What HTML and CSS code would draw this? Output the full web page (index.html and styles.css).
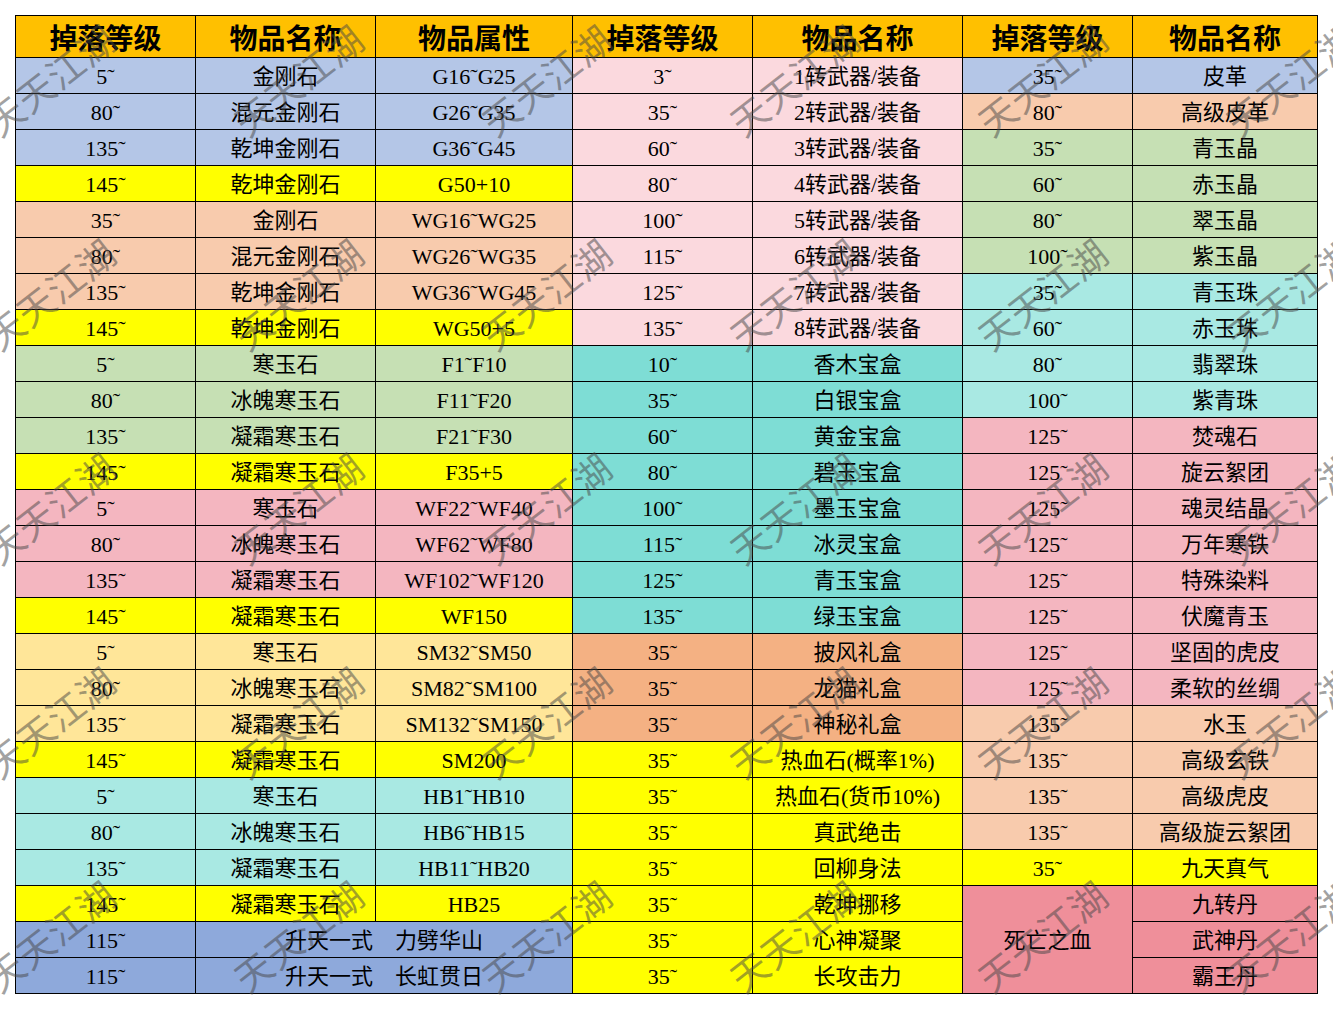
FILE: index.html
```html
<!DOCTYPE html>
<html lang="zh">
<head>
<meta charset="utf-8">
<title>掉落表</title>
<link rel="stylesheet" href="styles.css">
</head>
<body>
<div class="sheet">
<table class="drops">
<colgroup>
<col class="c1"><col class="c2"><col class="c3"><col class="c4"><col class="c5"><col class="c6"><col class="c7">
</colgroup>
<thead>
<tr><th>掉落等级</th><th>物品名称</th><th>物品属性</th><th>掉落等级</th><th>物品名称</th><th>掉落等级</th><th>物品名称</th></tr>
</thead>
<tbody>
<tr><td class="bl">5˜</td><td class="bl">金刚石</td><td class="bl">G16˜G25</td><td class="lp">3˜</td><td class="lp">1转武器/装备</td><td class="bl">35˜</td><td class="bl">皮革</td></tr>
<tr><td class="bl">80˜</td><td class="bl">混元金刚石</td><td class="bl">G26˜G35</td><td class="lp">35˜</td><td class="lp">2转武器/装备</td><td class="pe">80˜</td><td class="pe">高级皮革</td></tr>
<tr><td class="bl">135˜</td><td class="bl">乾坤金刚石</td><td class="bl">G36˜G45</td><td class="lp">60˜</td><td class="lp">3转武器/装备</td><td class="gr">35˜</td><td class="gr">青玉晶</td></tr>
<tr><td class="ye">145˜</td><td class="ye">乾坤金刚石</td><td class="ye">G50+10</td><td class="lp">80˜</td><td class="lp">4转武器/装备</td><td class="gr">60˜</td><td class="gr">赤玉晶</td></tr>
<tr><td class="pe">35˜</td><td class="pe">金刚石</td><td class="pe">WG16˜WG25</td><td class="lp">100˜</td><td class="lp">5转武器/装备</td><td class="gr">80˜</td><td class="gr">翠玉晶</td></tr>
<tr><td class="pe">80˜</td><td class="pe">混元金刚石</td><td class="pe">WG26˜WG35</td><td class="lp">115˜</td><td class="lp">6转武器/装备</td><td class="gr">100˜</td><td class="gr">紫玉晶</td></tr>
<tr><td class="pe">135˜</td><td class="pe">乾坤金刚石</td><td class="pe">WG36˜WG45</td><td class="lp">125˜</td><td class="lp">7转武器/装备</td><td class="cy">35˜</td><td class="cy">青玉珠</td></tr>
<tr><td class="ye">145˜</td><td class="ye">乾坤金刚石</td><td class="ye">WG50+5</td><td class="lp">135˜</td><td class="lp">8转武器/装备</td><td class="cy">60˜</td><td class="cy">赤玉珠</td></tr>
<tr><td class="gr">5˜</td><td class="gr">寒玉石</td><td class="gr">F1˜F10</td><td class="te">10˜</td><td class="te">香木宝盒</td><td class="cy">80˜</td><td class="cy">翡翠珠</td></tr>
<tr><td class="gr">80˜</td><td class="gr">冰魄寒玉石</td><td class="gr">F11˜F20</td><td class="te">35˜</td><td class="te">白银宝盒</td><td class="cy">100˜</td><td class="cy">紫青珠</td></tr>
<tr><td class="gr">135˜</td><td class="gr">凝霜寒玉石</td><td class="gr">F21˜F30</td><td class="te">60˜</td><td class="te">黄金宝盒</td><td class="pk">125˜</td><td class="pk">焚魂石</td></tr>
<tr><td class="ye">145˜</td><td class="ye">凝霜寒玉石</td><td class="ye">F35+5</td><td class="te">80˜</td><td class="te">碧玉宝盒</td><td class="pk">125˜</td><td class="pk">旋云絮团</td></tr>
<tr><td class="pk">5˜</td><td class="pk">寒玉石</td><td class="pk">WF22˜WF40</td><td class="te">100˜</td><td class="te">墨玉宝盒</td><td class="pk">125˜</td><td class="pk">魂灵结晶</td></tr>
<tr><td class="pk">80˜</td><td class="pk">冰魄寒玉石</td><td class="pk">WF62˜WF80</td><td class="te">115˜</td><td class="te">冰灵宝盒</td><td class="pk">125˜</td><td class="pk">万年寒铁</td></tr>
<tr><td class="pk">135˜</td><td class="pk">凝霜寒玉石</td><td class="pk">WF102˜WF120</td><td class="te">125˜</td><td class="te">青玉宝盒</td><td class="pk">125˜</td><td class="pk">特殊染料</td></tr>
<tr><td class="ye">145˜</td><td class="ye">凝霜寒玉石</td><td class="ye">WF150</td><td class="te">135˜</td><td class="te">绿玉宝盒</td><td class="pk">125˜</td><td class="pk">伏魔青玉</td></tr>
<tr><td class="ly">5˜</td><td class="ly">寒玉石</td><td class="ly">SM32˜SM50</td><td class="ta">35˜</td><td class="ta">披风礼盒</td><td class="pk">125˜</td><td class="pk">坚固的虎皮</td></tr>
<tr><td class="ly">80˜</td><td class="ly">冰魄寒玉石</td><td class="ly">SM82˜SM100</td><td class="ta">35˜</td><td class="ta">龙猫礼盒</td><td class="pk">125˜</td><td class="pk">柔软的丝绸</td></tr>
<tr><td class="ly">135˜</td><td class="ly">凝霜寒玉石</td><td class="ly">SM132˜SM150</td><td class="ta">35˜</td><td class="ta">神秘礼盒</td><td class="pe">135˜</td><td class="pe">水玉</td></tr>
<tr><td class="ye">145˜</td><td class="ye">凝霜寒玉石</td><td class="ye">SM200</td><td class="ye">35˜</td><td class="ye">热血石(概率1%)</td><td class="pe">135˜</td><td class="pe">高级玄铁</td></tr>
<tr><td class="cy">5˜</td><td class="cy">寒玉石</td><td class="cy">HB1˜HB10</td><td class="ye">35˜</td><td class="ye">热血石(货币10%)</td><td class="pe">135˜</td><td class="pe">高级虎皮</td></tr>
<tr><td class="cy">80˜</td><td class="cy">冰魄寒玉石</td><td class="cy">HB6˜HB15</td><td class="ye">35˜</td><td class="ye">真武绝击</td><td class="pe">135˜</td><td class="pe">高级旋云絮团</td></tr>
<tr><td class="cy">135˜</td><td class="cy">凝霜寒玉石</td><td class="cy">HB11˜HB20</td><td class="ye">35˜</td><td class="ye">回柳身法</td><td class="ye">35˜</td><td class="ye">九天真气</td></tr>
<tr><td class="ye">145˜</td><td class="ye">凝霜寒玉石</td><td class="ye">HB25</td><td class="ye">35˜</td><td class="ye">乾坤挪移</td><td class="dp" rowspan="3">死亡之血</td><td class="dp">九转丹</td></tr>
<tr><td class="db">115˜</td><td class="db" colspan="2">升天一式　力劈华山</td><td class="ye">35˜</td><td class="ye">心神凝聚</td><td class="dp">武神丹</td></tr>
<tr><td class="db">115˜</td><td class="db" colspan="2">升天一式　长虹贯日</td><td class="ye">35˜</td><td class="ye">长攻击力</td><td class="dp">霸王丹</td></tr>
</tbody>
</table>
<div class="watermarks" aria-hidden="true">
<span>天天江湖</span><span>天天江湖</span><span>天天江湖</span><span>天天江湖</span><span>天天江湖</span><span>天天江湖</span>
<span>天天江湖</span><span>天天江湖</span><span>天天江湖</span><span>天天江湖</span><span>天天江湖</span><span>天天江湖</span>
<span>天天江湖</span><span>天天江湖</span><span>天天江湖</span><span>天天江湖</span><span>天天江湖</span><span>天天江湖</span>
<span>天天江湖</span><span>天天江湖</span><span>天天江湖</span><span>天天江湖</span><span>天天江湖</span><span>天天江湖</span>
<span>天天江湖</span><span>天天江湖</span><span>天天江湖</span><span>天天江湖</span><span>天天江湖</span><span>天天江湖</span>
</div>
</div>
</body>
</html>
```
FILE: styles.css
```css
html, body {
  margin: 0;
  padding: 0;
  background: #ffffff;
}
body {
  width: 1333px;
  height: 1009px;
  overflow: hidden;
}
.sheet {
  position: relative;
  width: 1333px;
  height: 1009px;
  padding: 15px 0 0 15px;
  box-sizing: border-box;
  overflow: hidden;
}
.drops {
  border-collapse: collapse;
  table-layout: fixed;
  width: 1302px;
  font-family: "Liberation Serif", "Noto Sans CJK SC", serif;
  color: #000;
}
.c1 { width: 180px; }
.c2 { width: 180px; }
.c3 { width: 197px; }
.c4 { width: 180px; }
.c5 { width: 210px; }
.c6 { width: 170px; }
.c7 { width: 185px; }
.drops th,
.drops td {
  border: 1px solid #000;
  padding: 3px 0 0;
  text-align: center;
  vertical-align: middle;
  white-space: nowrap;
  line-height: 1;
}
.drops thead tr { height: 42px; }
.drops th {
  background: #ffc000;
  font-size: 28px;
  font-weight: bold;
  padding-top: 6px;
  height: 42px;
  box-sizing: border-box;
}
.drops tbody tr { height: 36px; }
.drops td {
  font-size: 22px;
}
.bl { background: #b4c6e7; }
.ye { background: #ffff00; }
.pe { background: #f8cbad; }
.gr { background: #c6e0b4; }
.pk { background: #f4b6c0; }
.ly { background: #ffe699; }
.cy { background: #a9e9e3; }
.lp { background: #fbd9de; }
.te { background: #7eddd5; }
.ta { background: #f4b183; }
.db { background: #8ea9db; }
.dp { background: #ef8f9a; }

.watermarks {
  position: absolute;
  left: -74px;
  top: -28px;
  display: grid;
  grid-template-columns: repeat(6, 248px);
  grid-auto-rows: 214px;
  pointer-events: none;
}
.watermarks span {
  display: flex;
  align-items: center;
  justify-content: center;
  font-family: "Noto Sans CJK SC", sans-serif;
  font-size: 37px;
  font-weight: 400;
  letter-spacing: 1px;
  color: rgba(70, 70, 70, 0.5);
  transform: rotate(-38deg);
  white-space: nowrap;
}
```
